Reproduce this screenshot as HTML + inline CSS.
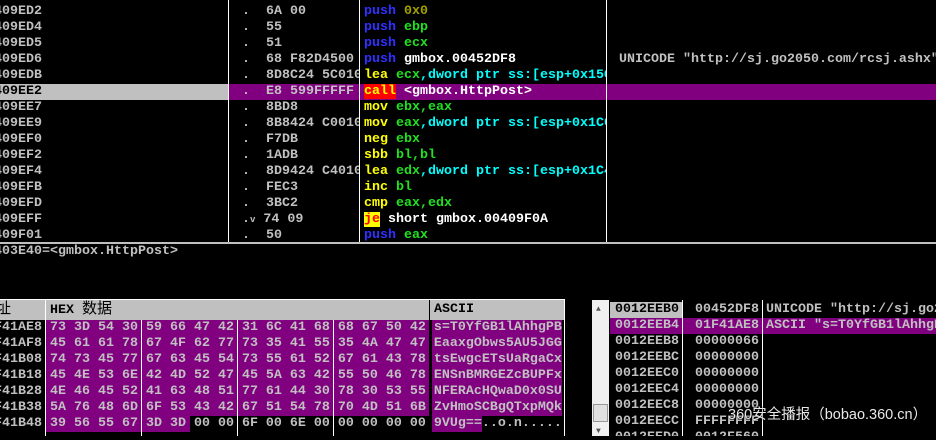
<!DOCTYPE html>
<html><head><meta charset="utf-8"><style>
*{margin:0;padding:0;box-sizing:border-box}
body{width:936px;height:436px;background:#000;overflow:hidden;position:relative;font-family:"Liberation Mono","Noto Sans CJK SC",monospace;font-weight:bold;font-size:13.33px;color:#c0c0c0}
.a{position:absolute;white-space:pre;line-height:16px;height:16px}
.v{position:absolute;background:#fff;width:1px}
.b{color:#3030ff}.g{color:#20e020}.y{color:#ffff00}.c{color:#00ffff}.o{color:#a0a000}.w{color:#fff}
.p{background:#800080}
.clip{position:absolute;overflow:hidden}
</style></head><body>
<!-- disasm -->
<div class="a" style="left:0;top:84px;width:228px;background:#c0c0c0"></div>
<div class="a p" style="left:228px;top:84px;width:708px"></div>
<div class="v" style="left:228px;top:0;height:242px"></div>
<div class="v" style="left:359px;top:0;height:242px"></div>
<div class="v" style="left:606px;top:0;height:242px"></div>

<div class="clip" style="left:0;top:0;width:228px;height:242px">
<div class="a" style="left:-22px;top:4px">00409ED2</div>
<div class="a" style="left:-22px;top:20px">00409ED4</div>
<div class="a" style="left:-22px;top:36px">00409ED5</div>
<div class="a" style="left:-22px;top:52px">00409ED6</div>
<div class="a" style="left:-22px;top:68px">00409EDB</div>
<div class="a" style="left:-22px;top:84px;color:#000">00409EE2</div>
<div class="a" style="left:-22px;top:100px">00409EE7</div>
<div class="a" style="left:-22px;top:116px">00409EE9</div>
<div class="a" style="left:-22px;top:132px">00409EF0</div>
<div class="a" style="left:-22px;top:148px">00409EF2</div>
<div class="a" style="left:-22px;top:164px">00409EF4</div>
<div class="a" style="left:-22px;top:180px">00409EFB</div>
<div class="a" style="left:-22px;top:196px">00409EFD</div>
<div class="a" style="left:-22px;top:212px">00409EFF</div>
<div class="a" style="left:-22px;top:228px">00409F01</div>
</div>

<div class="clip" style="left:229px;top:0;width:130px;height:242px">
<div class="a" style="left:13px;top:4px">.  6A 00</div>
<div class="a" style="left:13px;top:20px">.  55</div>
<div class="a" style="left:13px;top:36px">.  51</div>
<div class="a" style="left:13px;top:52px">.  68 F82D4500</div>
<div class="a" style="left:13px;top:68px">.  8D8C24 5C010000</div>
<div class="a" style="left:13px;top:84px">.  E8 599FFFFF</div>
<div class="a" style="left:13px;top:100px">.  8BD8</div>
<div class="a" style="left:13px;top:116px">.  8B8424 C0010000</div>
<div class="a" style="left:13px;top:132px">.  F7DB</div>
<div class="a" style="left:13px;top:148px">.  1ADB</div>
<div class="a" style="left:13px;top:164px">.  8D9424 C4010000</div>
<div class="a" style="left:13px;top:180px">.  FEC3</div>
<div class="a" style="left:13px;top:196px">.  3BC2</div>
<div class="a" style="left:13px;top:212px">.<span style="font-size:9px">v</span> 74 09</div>
<div class="a" style="left:13px;top:228px">.  50</div>
</div>

<div class="clip" style="left:360px;top:0;width:246px;height:242px">
<div class="a" style="left:4px;top:4px"><span class="b">push</span> <span class="o">0x0</span></div>
<div class="a" style="left:4px;top:20px"><span class="b">push</span> <span class="g">ebp</span></div>
<div class="a" style="left:4px;top:36px"><span class="b">push</span> <span class="g">ecx</span></div>
<div class="a" style="left:4px;top:52px"><span class="b">push</span> <span class="w">gmbox.00452DF8</span></div>
<div class="a" style="left:4px;top:68px"><span class="y">lea</span> <span class="g">ecx</span><span class="c">,dword ptr ss:[esp+0x15C]</span></div>
<div class="a" style="left:4px;top:84px"><span class="y" style="background:#ff0000">call</span> <span class="w">&lt;gmbox.HttpPost&gt;</span></div>
<div class="a" style="left:4px;top:100px"><span class="y">mov</span> <span class="g">ebx,eax</span></div>
<div class="a" style="left:4px;top:116px"><span class="y">mov</span> <span class="g">eax</span><span class="c">,dword ptr ss:[esp+0x1C0]</span></div>
<div class="a" style="left:4px;top:132px"><span class="y">neg</span> <span class="g">ebx</span></div>
<div class="a" style="left:4px;top:148px"><span class="y">sbb</span> <span class="g">bl,bl</span></div>
<div class="a" style="left:4px;top:164px"><span class="y">lea</span> <span class="g">edx</span><span class="c">,dword ptr ss:[esp+0x1C4]</span></div>
<div class="a" style="left:4px;top:180px"><span class="y">inc</span> <span class="g">bl</span></div>
<div class="a" style="left:4px;top:196px"><span class="y">cmp</span> <span class="g">eax,edx</span></div>
<div class="a" style="left:4px;top:212px"><span style="background:#ffff00;color:#ff0000">je</span> <span class="w">short gmbox.00409F0A</span></div>
<div class="a" style="left:4px;top:228px"><span class="b">push</span> <span class="g">eax</span></div>
</div>
<div class="clip" style="left:607px;top:0;width:329px;height:242px">
<div class="a" style="left:12px;top:52px">UNICODE "http://sj.go2050.com/rcsj.ashx"</div>
</div>

<div style="position:absolute;left:0;top:242px;width:936px;height:2px;background:#c0c0c0"></div>
<div class="clip" style="left:0;top:244px;width:936px;height:20px">
<div class="a" style="left:-14px;top:0">0403E40=&lt;gmbox.HttpPost&gt;</div>
</div>

<!-- dump -->
<div style="position:absolute;left:0;top:299px;width:565px;height:1px;background:#fff"></div>
<div style="position:absolute;left:0;top:300px;width:565px;height:20px;background:#c0c0c0"></div>
<div class="clip" style="left:0;top:300px;width:565px;height:20px">
<div class="a" style="left:-4px;top:2px;color:#000;font-weight:normal;font-size:15px">址</div>
<div class="a" style="left:50px;top:2px;color:#000">HEX <span style="font-weight:normal;font-size:15px">数据</span></div>
<div class="a" style="left:434px;top:2px;color:#000">ASCII</div>
</div>
<div class="v" style="left:45px;top:300px;height:136px"></div>
<div class="v" style="left:429px;top:300px;height:136px;background:#000"></div>
<div class="v" style="left:564px;top:300px;height:136px"></div>

<div class="a p" style="left:46px;top:320px;width:383px;height:96px"></div>
<div class="a p" style="left:46px;top:416px;width:144px"></div>
<div class="a p" style="left:432px;top:320px;width:130px;height:96px"></div>
<div class="a p" style="left:432px;top:416px;width:50px"></div>
<div class="v" style="left:141px;top:320px;height:116px"></div>
<div class="v" style="left:237px;top:320px;height:116px"></div>
<div class="v" style="left:333px;top:320px;height:116px"></div>

<div class="clip" style="left:0;top:320px;width:564px;height:116px">
<div class="a" style="left:-22px;top:0px">01F41AE8 73 3D 54 30 59 66 47 42 31 6C 41 68 68 67 50 42 s=T0YfGB1lAhhgPB</div>
<div class="a" style="left:-22px;top:16px">01F41AF8 45 61 61 78 67 4F 62 77 73 35 41 55 35 4A 47 47 EaaxgObws5AU5JGG</div>
<div class="a" style="left:-22px;top:32px">01F41B08 74 73 45 77 67 63 45 54 73 55 61 52 67 61 43 78 tsEwgcETsUaRgaCx</div>
<div class="a" style="left:-22px;top:48px">01F41B18 45 4E 53 6E 42 4D 52 47 45 5A 63 42 55 50 46 78 ENSnBMRGEZcBUPFx</div>
<div class="a" style="left:-22px;top:64px">01F41B28 4E 46 45 52 41 63 48 51 77 61 44 30 78 30 53 55 NFERAcHQwaD0x0SU</div>
<div class="a" style="left:-22px;top:80px">01F41B38 5A 76 48 6D 6F 53 43 42 67 51 54 78 70 4D 51 6B ZvHmoSCBgQTxpMQk</div>
<div class="a" style="left:-22px;top:96px">01F41B48 39 56 55 67 3D 3D 00 00 6F 00 6E 00 00 00 00 00 9VUg==..o.n.....</div>
</div>

<!-- scrollbar -->
<div style="position:absolute;left:592px;top:300px;width:17px;height:136px;background:#f0f0f0"></div>
<div class="a" style="left:596px;top:302px;font-size:8px;color:#555">▲</div>
<div style="position:absolute;left:593px;top:404px;width:15px;height:18px;background:#e0e0e0;border:1px solid #999"></div>
<div class="a" style="left:596px;top:424px;font-size:8px;color:#555">▼</div>

<!-- stack -->
<div class="a" style="left:610px;top:302px;width:72px;background:#c0c0c0"></div>
<div class="a p" style="left:610px;top:318px;width:326px"></div>
<div class="v" style="left:682px;top:300px;height:136px"></div>
<div class="v" style="left:762px;top:300px;height:136px"></div>
<div class="clip" style="left:610px;top:300px;width:326px;height:136px">
<div class="a" style="left:5px;top:2px;color:#000">0012EEB0</div>
<div class="a" style="left:5px;top:18px">0012EEB4</div>
<div class="a" style="left:5px;top:34px">0012EEB8</div>
<div class="a" style="left:5px;top:50px">0012EEBC</div>
<div class="a" style="left:5px;top:66px">0012EEC0</div>
<div class="a" style="left:5px;top:82px">0012EEC4</div>
<div class="a" style="left:5px;top:98px">0012EEC8</div>
<div class="a" style="left:5px;top:114px">0012EECC</div>
<div class="a" style="left:5px;top:130px">0012EED0</div>
<div class="a" style="left:85px;top:2px">00452DF8</div>
<div class="a" style="left:85px;top:18px">01F41AE8</div>
<div class="a" style="left:85px;top:34px">00000066</div>
<div class="a" style="left:85px;top:50px">00000000</div>
<div class="a" style="left:85px;top:66px">00000000</div>
<div class="a" style="left:85px;top:82px">00000000</div>
<div class="a" style="left:85px;top:98px">00000000</div>
<div class="a" style="left:85px;top:114px">FFFFFFFF</div>
<div class="a" style="left:85px;top:130px">0012F560</div>
<div class="a" style="left:156px;top:2px">UNICODE "http://sj.go2050.com"</div>
<div class="a" style="left:156px;top:18px">ASCII "s=T0YfGB1lAhhgPB"</div>
</div>

<div class="a" style="left:728px;top:403px;height:24px;line-height:24px;font-family:'Liberation Sans','Noto Sans CJK SC',sans-serif;font-weight:normal;font-size:14.5px;color:#e8e8e8;text-shadow:0 0 2px #000">360安全播报（bobao.360.cn）</div>
</body></html>
